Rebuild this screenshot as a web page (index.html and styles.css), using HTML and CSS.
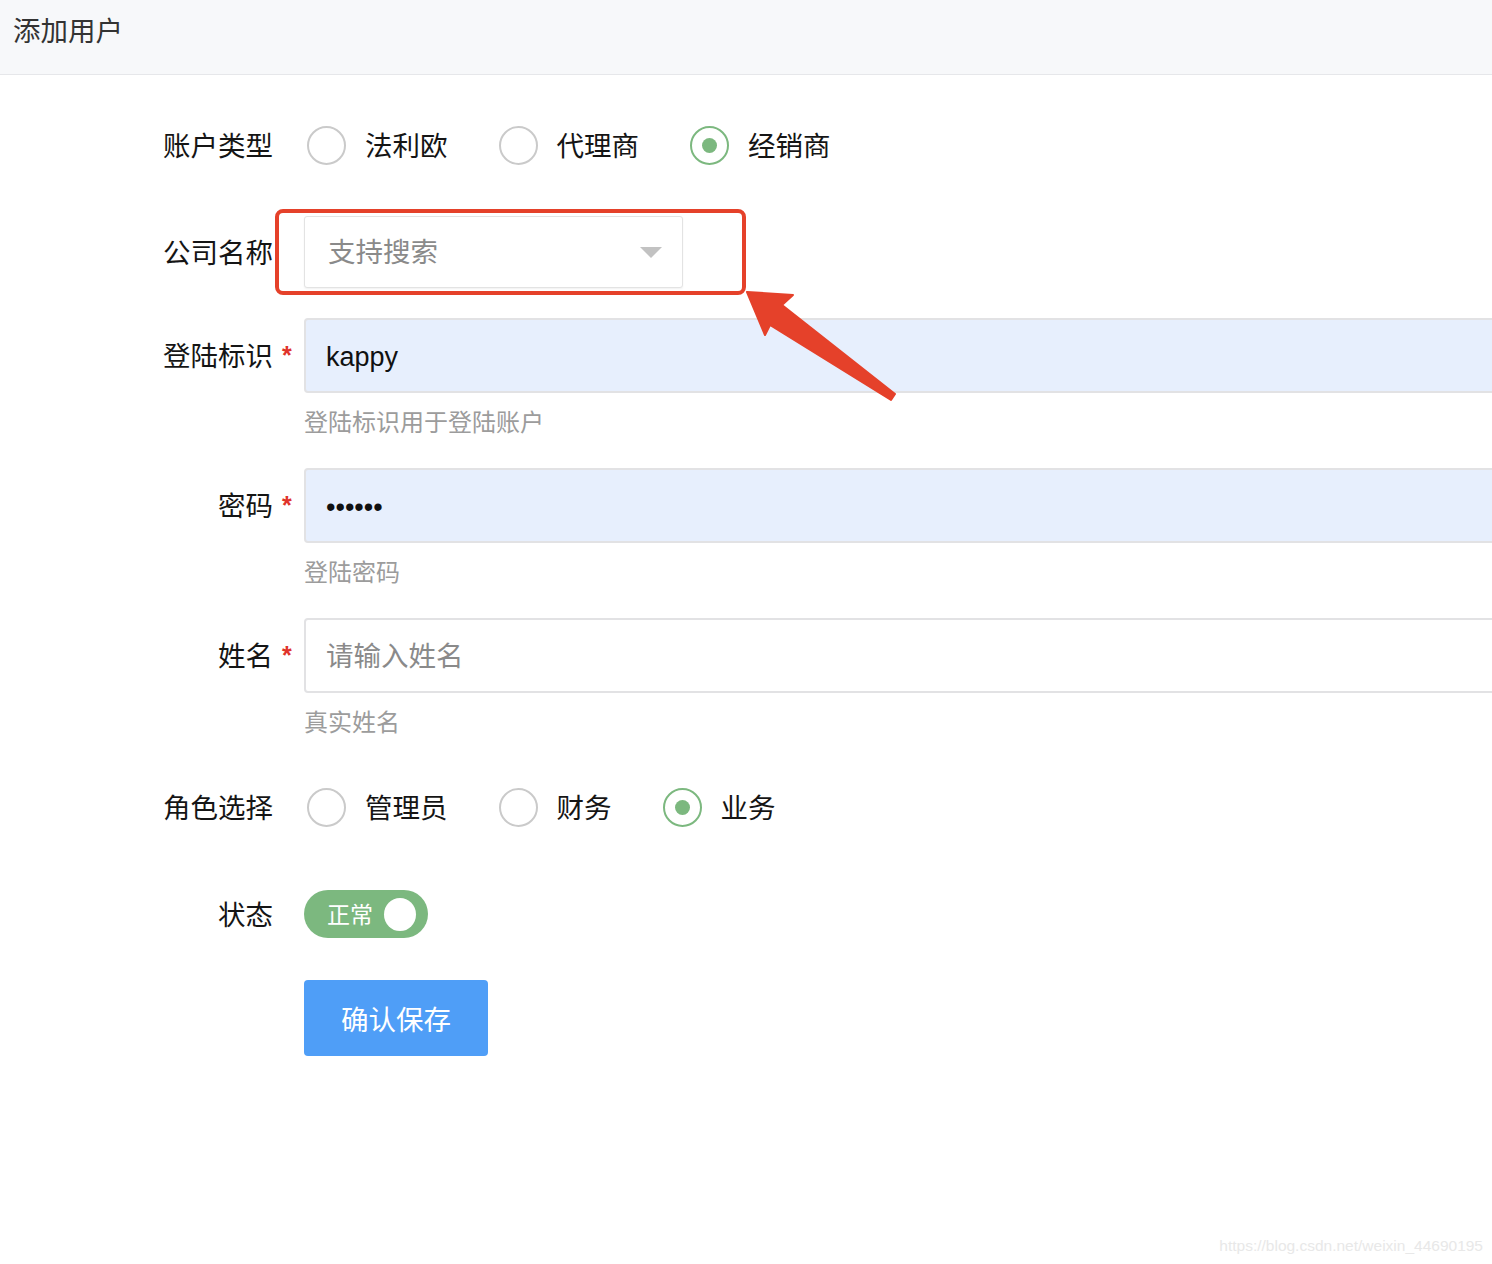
FILE: index.html
```html
<!DOCTYPE html>
<html lang="zh-CN">
<head>
<meta charset="utf-8">
<title>添加用户</title>
<link rel="stylesheet" href="styles.css">
</head>
<body>
<header class="page-header"><h1 class="page-title">添加用户</h1></header>
<form class="form">
  <div class="form-item item-type">
    <span class="label">账户类型</span><span class="req"></span>
    <div class="control radio-group">
      <label class="radio"><span class="radio-circle"></span><span class="radio-text">法利欧</span></label>
      <label class="radio"><span class="radio-circle"></span><span class="radio-text">代理商</span></label>
      <label class="radio checked"><span class="radio-circle"></span><span class="radio-text">经销商</span></label>
    </div>
  </div>
  <div class="form-item item-company">
    <span class="label">公司名称</span><span class="req"></span>
    <div class="control">
      <div class="select"><span class="select-placeholder">支持搜索</span><span class="select-caret"></span></div>
    </div>
  </div>
  <div class="form-item with-help">
    <span class="label">登陆标识</span><span class="req">*</span>
    <div class="control"><input class="input autofill" type="text" value="kappy"></div>
    <div class="help">登陆标识用于登陆账户</div>
  </div>
  <div class="form-item with-help">
    <span class="label">密码</span><span class="req">*</span>
    <div class="control"><input class="input autofill" type="password" value="123456"></div>
    <div class="help">登陆密码</div>
  </div>
  <div class="form-item with-help item-name">
    <span class="label">姓名</span><span class="req">*</span>
    <div class="control"><input class="input" type="text" placeholder="请输入姓名"></div>
    <div class="help">真实姓名</div>
  </div>
  <div class="form-item item-role">
    <span class="label">角色选择</span><span class="req"></span>
    <div class="control radio-group">
      <label class="radio"><span class="radio-circle"></span><span class="radio-text">管理员</span></label>
      <label class="radio"><span class="radio-circle"></span><span class="radio-text">财务</span></label>
      <label class="radio checked"><span class="radio-circle"></span><span class="radio-text">业务</span></label>
    </div>
  </div>
  <div class="form-item item-status">
    <span class="label">状态</span><span class="req"></span>
    <div class="control">
      <div class="switch"><span class="switch-text">正常</span><span class="switch-knob"></span></div>
    </div>
  </div>
  <div class="form-item item-submit">
    <span class="label"></span><span class="req"></span>
    <div class="control"><button type="button" class="btn-primary">确认保存</button></div>
  </div>
</form>

<div class="annot-box"></div>
<svg class="annot-arrow" width="1492" height="1264" viewBox="0 0 1492 1264">
  <polygon fill="#e5412a" stroke="#e5412a" stroke-width="2" stroke-linejoin="round"
    points="747,292 793,295 782,305 895,394 891,400 770,325 765,335"/>
</svg>
<div class="watermark">https://blog.csdn.net/weixin_44690195</div>
</body>
</html>
```
FILE: styles.css
```css
* { box-sizing: border-box; }
html, body {
  margin: 0;
  padding: 0;
}
body {
  width: 1492px;
  height: 1264px;
  overflow: hidden;
  position: relative;
  background: #ffffff;
  font-family: "Liberation Sans", "Noto Sans CJK SC", sans-serif;
  color: #151515;
}
.page-header {
  height: 75px;
  background: #f7f8fa;
  border-bottom: 1px solid #e6e7ea;
  padding: 12px 0 0 13px;
}
.page-title {
  margin: 0;
  font-size: 27.5px;
  font-weight: normal;
  line-height: 40px;
  color: #333333;
}
.form {
  padding-top: 35px;
  overflow: hidden;
}
.form-item {
  display: grid;
  grid-template-columns: 273px 31px 1188px;
  align-items: center;
}
.label {
  text-align: right;
  font-size: 27.5px;
  line-height: 40px;
  padding-top: 3px;
  white-space: nowrap;
  color: #151515;
}
.req {
  color: #e0332a;
  font-size: 25px;
  font-weight: bold;
  line-height: 24px;
  padding-left: 9px;
  align-self: center;
  margin-top: -2px;
}
.control {
  display: flex;
  align-items: center;
  min-width: 0;
}
.item-type { height: 71px; margin-bottom: 35px; }
.item-company { height: 72px; margin-bottom: 30px; }
.with-help { margin-bottom: 30px; }
.item-name { margin-bottom: 34px; }
.item-role { height: 71px; margin-bottom: 47px; }
.item-status { height: 48px; margin-bottom: 42px; }

.radio-group { padding-left: 3px; }
.radio {
  display: flex;
  align-items: center;
  margin-right: 51px;
}
.radio-circle {
  width: 39px;
  height: 39px;
  border: 2.5px solid #cacaca;
  border-radius: 50%;
  display: flex;
  align-items: center;
  justify-content: center;
  background: #fff;
}
.radio-text {
  margin-left: 19px;
  font-size: 27.5px;
  line-height: 40px;
  padding-top: 2px;
  color: #151515;
}
.radio.checked .radio-circle { border-color: #7cb87f; }
.radio.checked .radio-circle::after {
  content: "";
  width: 15px;
  height: 15px;
  border-radius: 50%;
  background: #7cb87f;
}

.select {
  width: 379px;
  height: 72px;
  border: 1px solid #e3e3e3;
  border-radius: 3px;
  background: #fff;
  display: flex;
  align-items: center;
  justify-content: space-between;
  padding: 0 20px 0 23px;
  box-shadow: 0 1px 2px rgba(0,0,0,0.06);
}
.select-placeholder {
  font-size: 27.5px;
  color: #8a8a8a;
  margin-top: -4px;
}
.select-caret {
  width: 0;
  height: 0;
  border-left: 11px solid transparent;
  border-right: 11px solid transparent;
  border-top: 11px solid #c2c2c2;
}

.input {
  flex: 0 0 1220px;
  width: 1220px;
  height: 75px;
  border: 2px solid #e2e2e4;
  border-radius: 4px;
  background: #fff;
  padding: 3px 20px 0;
  font-family: "Liberation Sans", "Noto Sans CJK SC", sans-serif;
  font-size: 27px;
  color: #111;
  outline: none;
}
.input.autofill { background: #e7effd; }
.input::placeholder { color: #8a8a8a; font-size: 27.5px; }
.help {
  grid-column: 3;
  margin-top: 15px;
  font-size: 24px;
  line-height: 30px;
  color: #9c9c9c;
}

.switch {
  width: 124px;
  height: 48px;
  border-radius: 24px;
  background: #7cb87f;
  display: flex;
  align-items: center;
  justify-content: space-between;
  padding: 0 12px 0 23px;
}
.switch-text {
  color: #fff;
  font-size: 23px;
  line-height: 30px;
  padding-top: 2px;
}
.switch-knob {
  width: 32px;
  height: 33px;
  border-radius: 50%;
  background: #fff;
}

.btn-primary {
  width: 184px;
  height: 76px;
  border: none;
  border-radius: 4px;
  background: #4f9ef7;
  color: #fff;
  font-family: "Liberation Sans", "Noto Sans CJK SC", sans-serif;
  font-size: 27.5px;
  padding: 0;
}

.annot-box {
  position: absolute;
  left: 275px;
  top: 209px;
  width: 471px;
  height: 86px;
  border: 4px solid #e5412a;
  border-radius: 8px;
  pointer-events: none;
}
.annot-arrow {
  position: absolute;
  left: 0;
  top: 0;
  pointer-events: none;
}
.watermark {
  position: absolute;
  right: 9px;
  bottom: 9px;
  font-size: 15.5px;
  color: #e8e8e8;
  font-family: "Liberation Sans", sans-serif;
}
```
